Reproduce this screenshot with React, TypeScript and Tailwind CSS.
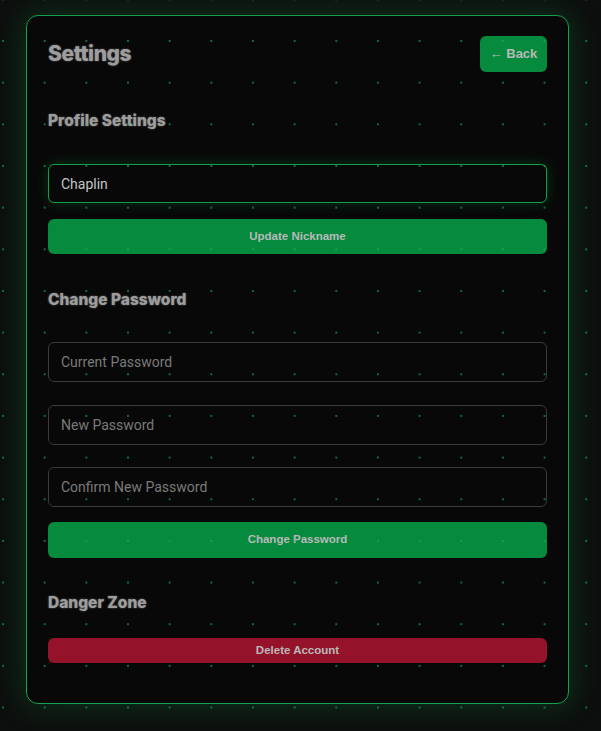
import React, { useState } from 'react';

const heading = "font-['Inter',sans-serif] font-extrabold text-[#9d9d9d] [text-shadow:0_0_2px_rgba(170,170,170,0.6)]";
const btnText = "font-['Liberation_Sans',Arial,sans-serif] font-bold text-[#b9b9b9]";
const inputBase =
  "w-full rounded-[6px] bg-[#080808] px-[12px] font-['Roboto',sans-serif] text-[14px] text-[#c4c4c4] placeholder:text-[#7a7a7a] outline-none";

export default function App() {
  const [nickname, setNickname] = useState('Chaplin');

  return (
    <div className="relative min-h-[731px] w-full bg-[#0d0f0e] pl-[26px] pt-[15px] pb-[29px]">
      <div className="relative w-[543px] rounded-[12px] border border-[#14a050] bg-[#080808] px-[21px] pt-[20px] pb-[40px] shadow-[0_0_28px_4px_rgba(16,160,70,0.22)]">
        <div className="flex items-center justify-between">
          <h1 className={`${heading} text-[21px] tracking-[-0.4px]`}>Settings</h1>
          <button className={`${btnText} h-[36px] w-[67px] rounded-[6px] bg-[#058a3e] text-[13px]`}>
            ← Back
          </button>
        </div>

        <h2 className={`${heading} mt-[37px] text-[15.5px]`}>Profile Settings</h2>
        <input
          className={`${inputBase} mt-[32px] h-[39px] border border-[#10a048] shadow-[0_0_14px_rgba(16,160,70,0.28)]`}
          value={nickname}
          onChange={(e) => setNickname(e.target.value)}
          autoFocus
        />
        <button className={`${btnText} mt-[16px] h-[35px] w-full rounded-[6px] bg-[#058a3e] text-[11.5px]`}>
          Update Nickname
        </button>

        <h2 className={`${heading} mt-[34px] text-[15.5px]`}>Change Password</h2>
        <div className="mt-[30px] flex flex-col gap-[23px]">
          <input type="password" className={`${inputBase} h-[40px] border border-[#3a3a3a]`} placeholder="Current Password" />
          <input type="password" className={`${inputBase} h-[40px] border border-[#3a3a3a]`} placeholder="New Password" />
        </div>
        <input
          type="password"
          className={`${inputBase} mt-[22px] h-[40px] border border-[#3a3a3a]`}
          placeholder="Confirm New Password"
        />
        <button className={`${btnText} mt-[15px] h-[36px] w-full rounded-[6px] bg-[#058a3e] text-[11.5px]`}>
          Change Password
        </button>

        <h2 className={`${heading} mt-[33px] text-[15.5px]`}>Danger Zone</h2>
        <button className={`${btnText} mt-[24px] h-[25px] w-full rounded-[6px] bg-[#95122b] text-[11.5px]`}>
          Delete Account
        </button>
      </div>

      {/* dot grid overlay */}
      <div className="pointer-events-none absolute inset-0 bg-[radial-gradient(circle,rgba(20,190,90,0.55)_0.8px,transparent_1.2px)] bg-[length:41.67px_41.67px] bg-[position:-17.8px_20.2px]" />
    </div>
  );
}
